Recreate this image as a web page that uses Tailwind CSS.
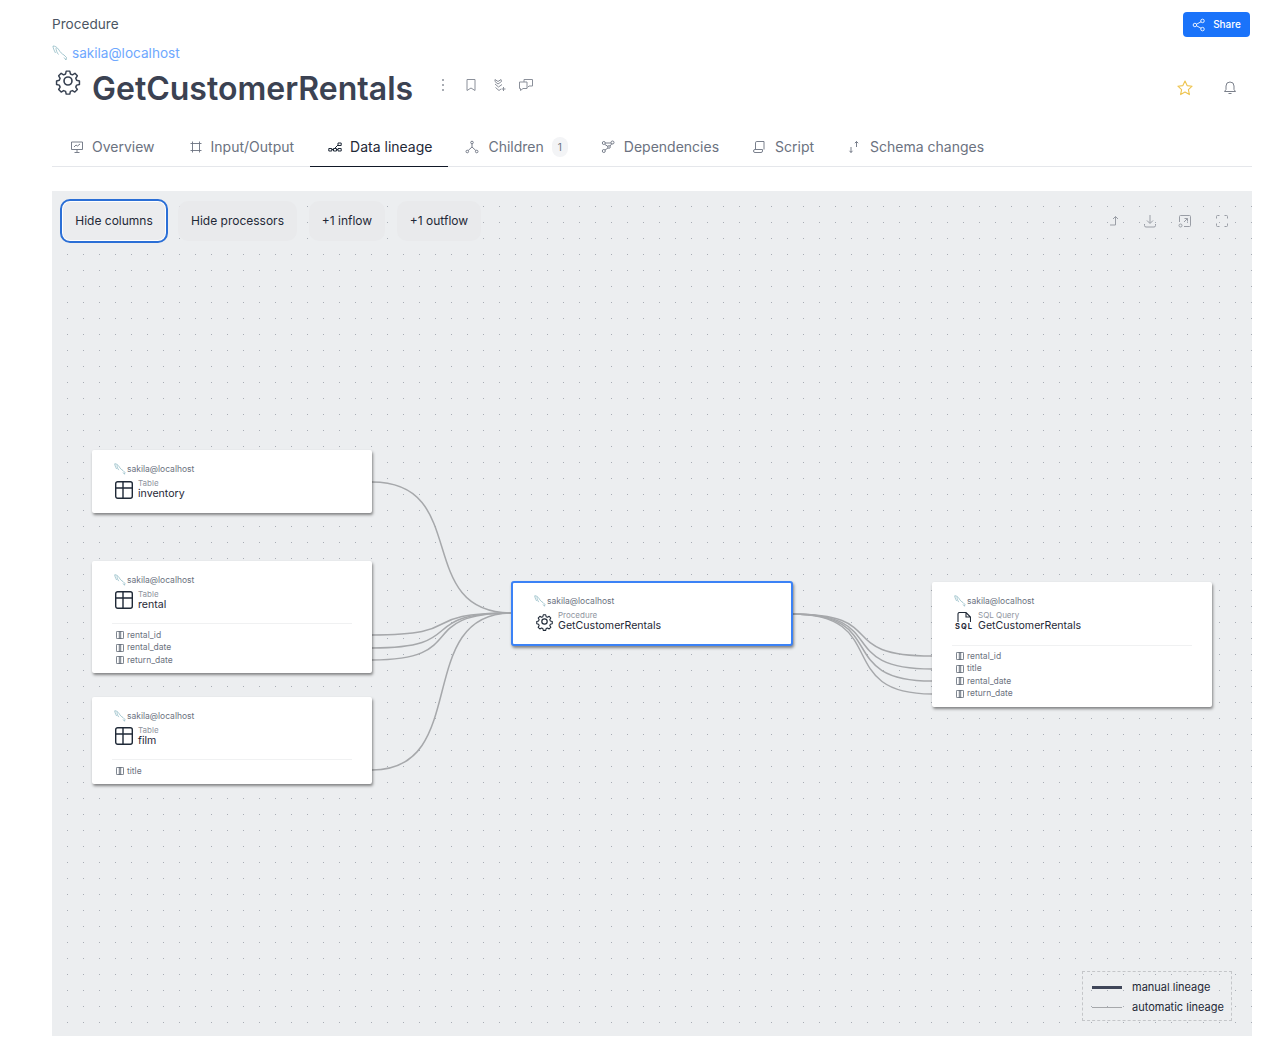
<!DOCTYPE html>
<html lang="en">
<head>
    <meta charset="UTF-8">
    <title>GetCustomerRentals - Data lineage</title>
    <script src="https://cdn.jsdelivr.net/npm/@tailwindcss/browser@4"></script>
</head>
<body class="bg-white min-h-screen font-['Inter',sans-serif] text-[#374151]">
    <div class="pl-[52px] pr-[15px] pt-3">
        <!-- header -->
        <div class="flex justify-between items-start h-[25px]">
            <span class="text-[13.6px] leading-[24px] text-[#4b5563]">Procedure</span>
            <button class="mr-[2px] w-[67px] h-[25px] bg-[#1a73fa] rounded-[4px] flex items-center justify-center gap-[7px] text-white text-[10px] font-medium">
                <svg class="w-[14px] h-[14px]" viewBox="0 0 24 24" fill="none" stroke="currentColor" stroke-width="1.5"><circle cx="5" cy="12" r="3"/><circle cx="18" cy="5" r="3"/><circle cx="18" cy="19" r="3"/><path d="M8 10.5l7.5-4M8 13.5l7.5 4"/></svg>
                Share
            </button>
        </div>
        <div class="flex items-center gap-[4px] mt-[6px] h-5">
            <svg class="w-4 h-4" viewBox="0 0 16 16" fill="none" stroke="#7fb0bc" stroke-width=".7"><path d="M1 1C3 1 5 2 7 5C8 7 10 9 12 10L14.500 12.500L14 15L12 12.500M1 1C1 3 2 5 3.500 8M4 3C4 5 5 8 6.500 9.500"/></svg>
            <span class="text-[13.6px] text-[#6ea8fe]">sakila@localhost</span>
        </div>
        <div class="flex items-start h-[44px] mt-[4px]">
            <svg class="w-[28px] h-[28px] ml-[2px] text-[#374151]" viewBox="0 0 24 24" fill="none" stroke="currentColor" stroke-width="1.4" stroke-linejoin="round"><path d="M10.3 2.6h3.4l.6 2.7 1.9.8 2.4-1.4 2.3 2.4-1.5 2.3.8 1.9 2.7.7v3.3l-2.7.6-.8 1.9 1.5 2.3-2.4 2.4-2.3-1.4-1.9.8-.6 2.6h-3.4l-.6-2.6-1.9-.8-2.3 1.4-2.4-2.4 1.4-2.3-.8-1.9-2.6-.6v-3.3l2.6-.7.8-1.9-1.4-2.3 2.4-2.4 2.3 1.4 1.9-.8z" transform="translate(1.2 1.2) scale(.9)"/><circle cx="12" cy="12" r="3.4"/></svg>
            <h1 class="ml-[10px] text-[32px] leading-[44px] font-semibold text-[#3b4252]">GetCustomerRentals</h1>
            <div class="flex items-center ml-[22px] mt-[4px] h-[28px] text-[#8b909a]">
                <svg class="w-4 h-4" viewBox="0 0 16 16" fill="currentColor"><circle cx="8" cy="3" r="1"/><circle cx="8" cy="8" r="1"/><circle cx="8" cy="13" r="1"/></svg>
                <svg class="w-[14px] h-[14px] ml-[13px]" viewBox="0 0 14 14" fill="none" stroke="currentColor"><path d="M3 1.5h8v11L7 10l-4 2.500z"/></svg>
                <svg class="w-[14px] h-[14px] ml-[15px]" viewBox="0 0 14 14" fill="none" stroke="currentColor"><path d="M2 1.500l3 2 3-2 .5 2-3.500 2.500-3-2.500zM2 6l3.500 3L9 6.500M2.500 9.500L6 12.500l2-1.500M10.500 9v4M8.500 11h4"/></svg>
                <svg class="w-[16px] h-[14px] ml-[11px]" viewBox="0 0 16 14" fill="none" stroke="currentColor"><path d="M6 4V1.500h8.500V8H11l-1.500 1.500M6 4H1.500v6.500h1v2L5 10.500h4V4z"/></svg>
            </div>
            <div class="ml-auto flex items-center mt-[13px] mr-[15px] gap-[30px]">
                <svg class="w-4 h-4" viewBox="0 0 16 16" fill="none" stroke="#eec44f" stroke-width="1.100" stroke-linejoin="round"><path d="M8 1l2.100 4.600 5 .6-3.700 3.400 1 5L8 12.100 3.600 14.600l1-5L.9 6.200l5-.6z"/></svg>
                <svg class="w-[14px] h-[14px]" viewBox="0 0 14 14" fill="none" stroke="#7b808b"><path d="M7 1a4 4 0 0 1 4 4v3.500l1.500 2h-11l1.500-2V5a4 4 0 0 1 4-4zM5.500 12.500h3"/></svg>
            </div>
        </div>

        <!-- tabs -->
        <div class="mt-[17px] h-[39px] border-b border-[#e5e7eb] flex items-stretch text-sm text-[#6b7280]">
            <a class="flex items-center gap-2 pl-[18px] pr-[17px]">
                <svg class="w-[14px] h-[14px]" viewBox="0 0 14 14" fill="none" stroke="currentColor" stroke-width=".9"><path d="M1.500 2h11v7.500h-11zM7 9.500V12M4.500 12.500h5M4 7l2-2 1.500 1L10 4"/></svg>
                <span>Overview</span>
            </a>
            <a class="flex items-center gap-2 pl-[17px] pr-4">
                <svg class="w-[14px] h-[14px]" viewBox="0 0 14 14" fill="none" stroke="currentColor" stroke-width=".9"><path d="M1.500 3.500h11M1.500 10.500h11M3.500 1.500v11M10.500 1.500v11"/></svg>
                <span>Input/Output</span>
            </a>
            <a class="flex items-center gap-2 pr-[16px] pl-[18px] border-b border-[#111827] -mb-px text-[#1f2937]">
                <svg class="w-[14px] h-[14px]" viewBox="0 0 14 14" fill="none" stroke="currentColor"><path d="M.8 8.500h3v2.500h-3zM5.500 8.500h3V11h-3zM10 3h3.200v2.500H10zM10 8.500h3.200V11H10zM3.800 9.500h1.700M8.500 9.500H10M6.500 8.500L10 5"/></svg>
                <span>Data lineage</span>
            </a>
            <a class="flex items-center gap-[9px] pl-[17px] pr-[17px]">
                <svg class="w-[14px] h-[14px]" viewBox="0 0 14 14" fill="none" stroke="currentColor" stroke-width=".9"><circle cx="7" cy="2.500" r="1.300"/><circle cx="2.300" cy="11.500" r="1.300"/><circle cx="11.700" cy="11.500" r="1.300"/><path d="M7 3.800V7M7 7L3.200 10.500M7 7l3.800 3.500"/></svg>
                <span>Children</span>
                <span class="ml-[-1px] w-4 h-5 rounded-lg bg-[#f3f4f6] text-[10px] flex items-center justify-center">1</span>
            </a>
            <a class="flex items-center gap-[9px] pl-4 pr-[15px]">
                <svg class="w-[14px] h-[14px]" viewBox="0 0 14 14" fill="none" stroke="currentColor" stroke-width=".9"><circle cx="2.800" cy="3" r="1.500"/><circle cx="11.500" cy="2.500" r="1.500"/><circle cx="8" cy="7" r="1.300"/><circle cx="2.800" cy="11" r="1.500"/><path d="M4.300 3h5.700M4 4.500L7 6.500M7 8L4 10M9 6l2-2.500"/></svg>
                <span>Dependencies</span>
            </a>
            <a class="flex items-center gap-[9px] pl-[18px] pr-[15px]">
                <svg class="w-[14px] h-[14px]" viewBox="0 0 14 14" fill="none" stroke="currentColor" stroke-width=".9"><path d="M3.500 9V2.800A1.300 1.300 0 0 1 4.800 1.500H12v8M1.500 11a1.500 1.500 0 0 1 1.500-1.500h7.500v1.500a1.500 1.500 0 0 1-1.500 1.500H3A1.500 1.500 0 0 1 1.500 11z"/></svg>
                <span>Script</span>
            </a>
            <a class="flex items-center gap-[9px] pl-[18px] pr-4">
                <svg class="w-[14px] h-[14px]" viewBox="0 0 14 14" fill="none" stroke="currentColor" stroke-width=".9"><path d="M9.500 7V1.500M7.800 3.200l1.700-1.700 1.700 1.700M4 7v5.500M2.500 10.800L4 12.500l1.500-1.700"/></svg>
                <span>Schema changes</span>
            </a>
        </div>

        <!-- lineage canvas -->
        <div class="relative mt-6 h-[845px] bg-[#eceef0] bg-[radial-gradient(circle_at_15.5px_15.5px,#a8adb5_0.5px,transparent_0.9px)] bg-[size:16px_16px]">
            <!-- edges -->
            <svg class="absolute inset-0 w-full h-full" viewBox="0 0 1200 845" fill="none" stroke="#a6a8ab" stroke-width="1.500">
                <path d="M320 291C420 291 360 422 460 422"/>
                <path d="M320 444C420 444 360 422 460 422"/>
                <path d="M320 457C420 457 360 422 460 422"/>
                <path d="M320 469C420 469 360 422 460 422"/>
                <path d="M320 579C420 579 360 422 460 422"/>
                <path d="M740 423C840 423 780 465 880 465"/>
                <path d="M740 423C840 423 780 478 880 478"/>
                <path d="M740 423C840 423 780 490 880 490"/>
                <path d="M740 423C840 423 780 503 880 503"/>
            </svg>

            <!-- toolbar -->
            <div class="relative flex items-center pt-2 pl-2 text-xs text-[#1f2937]">
                <button class="h-[44px] w-[108px] rounded-[10px] border-2 border-[#2b6fd6] bg-[#ebecee] shadow-[inset_0_0_0_1px_#fff]">Hide columns</button>
                <button class="ml-[10px] h-10 w-[119px] rounded-[10px] bg-[#e9eaec]">Hide processors</button>
                <button class="ml-3 h-10 w-[76px] rounded-[10px] bg-[#e9eaec]">+1 inflow</button>
                <button class="ml-3 h-10 w-[84px] rounded-[10px] bg-[#e9eaec]">+1 outflow</button>
                <div class="ml-auto mr-[23px] flex items-center gap-[21px] text-[#9a9ea6]">
                    <svg class="w-[14px] h-[14px]" viewBox="0 0 14 14" fill="none" stroke="currentColor"><path d="M7.500 11V2.500M5 5l2.500-2.500L10 5M7.500 11H2"/></svg>
                    <svg class="w-[14px] h-[14px]" viewBox="0 0 14 14" fill="none" stroke="currentColor"><path d="M7 1v8M4 6.500L7 9.500l3-3M1.500 10v1.500a1.500 1.500 0 0 0 1.500 1.500h8a1.500 1.500 0 0 0 1.500-1.500V10"/></svg>
                    <svg class="w-[14px] h-[14px]" viewBox="0 0 14 14" fill="none" stroke="currentColor"><path d="M1.500 8V2.500a1 1 0 0 1 1-1h9a1 1 0 0 1 1 1v9a1 1 0 0 1-1 1H6M6 8l3.500-3.500M6.500 4.500h3v3"/><circle cx="2.500" cy="11.500" r="1.500"/></svg>
                    <svg class="w-[14px] h-[14px] ml-[2px]" viewBox="0 0 14 14" fill="none" stroke="currentColor"><path d="M1.500 4.500v-2a1 1 0 0 1 1-1h2M9.500 1.500h2a1 1 0 0 1 1 1v2M12.500 9.500v2a1 1 0 0 1-1 1h-2M4.500 12.500h-2a1 1 0 0 1-1-1v-2"/></svg>
                </div>
            </div>

            <!-- inventory -->
            <div class="absolute left-10 top-[259px] w-[280px] h-[63px] bg-white rounded-[2px] shadow-[1px_2px_3px_rgba(0,0,0,.45)] px-5 pt-[13px]">
                <div class="flex items-center gap-[1px] h-3 text-[8.5px] text-[#6b7280]">
                    <svg class="w-3 h-3 ml-[2px]" viewBox="0 0 16 16" fill="none" stroke="#7fb0bc" stroke-width=".9"><path d="M1 1C3 1 5 2 7 5C8 7 10 9 12 10L14.500 12.500L14 15L12 12.500M1 1C1 3 2 5 3.500 8M4 3C4 5 5 8 6.500 9.500"/></svg>
                    <span>sakila@localhost</span>
                </div>
                <div class="flex items-center h-[18px] gap-[5px] mt-[6px] ml-[3px]">
                    <svg class="w-[18px] h-[18px] text-[#1f2937]" viewBox="0 0 18 18" fill="none" stroke="currentColor" stroke-width="1.400"><rect x=".7" y=".7" width="16.600" height="16.600" rx="2"/><path d="M.7 7h16.600M8 .7v16.600"/></svg>
                    <div class="leading-none -mt-[2px]">
                        <div class="text-[8px] text-[#8f95a0]">Table</div>
                        <div class="text-[10.6px] text-[#1f2937] mt-[2px]">inventory</div>
                    </div>
                </div>
            </div>

            <!-- rental -->
            <div class="absolute left-10 top-[370px] w-[280px] h-[112px] bg-white rounded-[2px] shadow-[1px_2px_3px_rgba(0,0,0,.45)] px-5 pt-[13px]">
                <div class="flex items-center gap-[1px] h-3 text-[8.5px] text-[#6b7280]">
                    <svg class="w-3 h-3 ml-[2px]" viewBox="0 0 16 16" fill="none" stroke="#7fb0bc" stroke-width=".9"><path d="M1 1C3 1 5 2 7 5C8 7 10 9 12 10L14.500 12.500L14 15L12 12.500M1 1C1 3 2 5 3.500 8M4 3C4 5 5 8 6.500 9.500"/></svg>
                    <span>sakila@localhost</span>
                </div>
                <div class="flex items-center h-[18px] gap-[5px] mt-[5px] ml-[3px]">
                    <svg class="w-[18px] h-[18px] text-[#1f2937]" viewBox="0 0 18 18" fill="none" stroke="currentColor" stroke-width="1.400"><rect x=".7" y=".7" width="16.600" height="16.600" rx="2"/><path d="M.7 7h16.600M8 .7v16.600"/></svg>
                    <div class="leading-none">
                        <div class="text-[8px] text-[#8f95a0]">Table</div>
                        <div class="text-[10.6px] text-[#1f2937] mt-[2px]">rental</div>
                    </div>
                </div>
                <div class="mt-[14px] pt-[5px] border-t border-[#f0f1f2] text-[8.5px] text-[#6b7280]">
                    <div class="flex items-center gap-[3px] h-[12.5px] ml-[4px]"><svg class="w-2 h-2" viewBox="0 0 8 8" fill="none" stroke="#4b5563" stroke-width=".8"><rect x=".4" y=".4" width="7.200" height="7.200" rx=".8"/><path d="M3.300 .4v7.200M4.700 .4v7.200"/></svg>rental_id</div>
                    <div class="flex items-center gap-[3px] h-[12.5px] ml-[4px]"><svg class="w-2 h-2" viewBox="0 0 8 8" fill="none" stroke="#4b5563" stroke-width=".8"><rect x=".4" y=".4" width="7.200" height="7.200" rx=".8"/><path d="M3.300 .4v7.200M4.700 .4v7.200"/></svg>rental_date</div>
                    <div class="flex items-center gap-[3px] h-[12.5px] ml-[4px]"><svg class="w-2 h-2" viewBox="0 0 8 8" fill="none" stroke="#4b5563" stroke-width=".8"><rect x=".4" y=".4" width="7.200" height="7.200" rx=".8"/><path d="M3.300 .4v7.200M4.700 .4v7.200"/></svg>return_date</div>
                </div>
            </div>

            <!-- film -->
            <div class="absolute left-10 top-[506px] w-[280px] h-[87px] bg-white rounded-[2px] shadow-[1px_2px_3px_rgba(0,0,0,.45)] px-5 pt-[13px]">
                <div class="flex items-center gap-[1px] h-3 text-[8.5px] text-[#6b7280]">
                    <svg class="w-3 h-3 ml-[2px]" viewBox="0 0 16 16" fill="none" stroke="#7fb0bc" stroke-width=".9"><path d="M1 1C3 1 5 2 7 5C8 7 10 9 12 10L14.500 12.500L14 15L12 12.500M1 1C1 3 2 5 3.500 8M4 3C4 5 5 8 6.500 9.500"/></svg>
                    <span>sakila@localhost</span>
                </div>
                <div class="flex items-center h-[18px] gap-[5px] mt-[5px] ml-[3px]">
                    <svg class="w-[18px] h-[18px] text-[#1f2937]" viewBox="0 0 18 18" fill="none" stroke="currentColor" stroke-width="1.400"><rect x=".7" y=".7" width="16.600" height="16.600" rx="2"/><path d="M.7 7h16.600M8 .7v16.600"/></svg>
                    <div class="leading-none">
                        <div class="text-[8px] text-[#8f95a0]">Table</div>
                        <div class="text-[10.6px] text-[#1f2937] mt-[2px]">film</div>
                    </div>
                </div>
                <div class="mt-[14px] pt-[5px] border-t border-[#f0f1f2] text-[8.5px] text-[#6b7280]">
                    <div class="flex items-center gap-[3px] h-[12.5px] ml-[4px]"><svg class="w-2 h-2" viewBox="0 0 8 8" fill="none" stroke="#4b5563" stroke-width=".8"><rect x=".4" y=".4" width="7.200" height="7.200" rx=".8"/><path d="M3.300 .4v7.200M4.700 .4v7.200"/></svg>title</div>
                </div>
            </div>

            <!-- procedure -->
            <div class="absolute left-[459px] top-[390px] w-[282px] h-[65px] bg-white rounded-[3px] border-2 border-[#3b82f6] shadow-[1px_2px_3px_rgba(0,0,0,.45)] px-5 pt-[12px]">
                <div class="flex items-center gap-[1px] h-3 text-[8.5px] text-[#6b7280]">
                    <svg class="w-3 h-3 ml-[1px]" viewBox="0 0 16 16" fill="none" stroke="#7fb0bc" stroke-width=".9"><path d="M1 1C3 1 5 2 7 5C8 7 10 9 12 10L14.500 12.500L14 15L12 12.500M1 1C1 3 2 5 3.500 8M4 3C4 5 5 8 6.500 9.500"/></svg>
                    <span>sakila@localhost</span>
                </div>
                <div class="flex items-center h-[19px] gap-[4px] mt-[5px] ml-[2px]">
                    <svg class="w-[19px] h-[19px] text-[#1f2937]" viewBox="0 0 24 24" fill="none" stroke="currentColor" stroke-width="1.500" stroke-linejoin="round"><path d="M10.3 2.600h3.400l.6 2.700 1.900.8 2.400-1.400 2.300 2.400-1.500 2.300.8 1.900 2.700.7v3.300l-2.700.6-.8 1.900 1.500 2.300-2.400 2.400-2.300-1.400-1.900.8-.6 2.600h-3.400l-.6-2.600-1.900-.8-2.300 1.400-2.400-2.400 1.400-2.300-.8-1.900-2.600-.6v-3.300l2.600-.7.8-1.900-1.400-2.300 2.400-2.400 2.300 1.400 1.900-.8z" transform="translate(1.200 1.200) scale(.9)"/><circle cx="12" cy="12" r="3.400"/></svg>
                    <div class="leading-none">
                        <div class="text-[8px] text-[#8f95a0]">Procedure</div>
                        <div class="text-[10.6px] text-[#1f2937] mt-[2px]">GetCustomerRentals</div>
                    </div>
                </div>
            </div>

            <!-- sql query -->
            <div class="absolute left-[880px] top-[391px] w-[280px] h-[125px] bg-white rounded-[2px] shadow-[1px_2px_3px_rgba(0,0,0,.45)] px-5 pt-[13px]">
                <div class="flex items-center gap-[1px] h-3 text-[8.5px] text-[#6b7280]">
                    <svg class="w-3 h-3 ml-[2px]" viewBox="0 0 16 16" fill="none" stroke="#7fb0bc" stroke-width=".9"><path d="M1 1C3 1 5 2 7 5C8 7 10 9 12 10L14.500 12.500L14 15L12 12.500M1 1C1 3 2 5 3.500 8M4 3C4 5 5 8 6.500 9.500"/></svg>
                    <span>sakila@localhost</span>
                </div>
                <div class="flex items-center h-[19px] gap-[6px] mt-[5px] ml-[4px]">
                    <div class="w-4 h-[19px] flex flex-col items-center">
                        <svg class="w-[14px] h-[10px] text-[#1f2937]" viewBox="0 0 14 10" fill="none" stroke="currentColor" stroke-width="1.100"><path d="M1 10V2a1.500 1.500 0 0 1 1.500-1.500H9L13.500 5v5M9 .5V5h4.500"/></svg>
                        <span class="text-[7.5px] leading-[9px] font-bold tracking-[1px] text-[#1f2937]">SQL</span>
                    </div>
                    <div class="leading-none">
                        <div class="text-[8px] text-[#8f95a0]">SQL Query</div>
                        <div class="text-[10.6px] text-[#1f2937] mt-[2px]">GetCustomerRentals</div>
                    </div>
                </div>
                <div class="mt-[14px] pt-[4px] border-t border-[#f0f1f2] text-[8.5px] text-[#6b7280]">
                    <div class="flex items-center gap-[3px] h-[12.5px] ml-[4px]"><svg class="w-2 h-2" viewBox="0 0 8 8" fill="none" stroke="#4b5563" stroke-width=".8"><rect x=".4" y=".4" width="7.200" height="7.200" rx=".8"/><path d="M3.300 .4v7.200M4.700 .4v7.200"/></svg>rental_id</div>
                    <div class="flex items-center gap-[3px] h-[12.5px] ml-[4px]"><svg class="w-2 h-2" viewBox="0 0 8 8" fill="none" stroke="#4b5563" stroke-width=".8"><rect x=".4" y=".4" width="7.200" height="7.200" rx=".8"/><path d="M3.300 .4v7.200M4.700 .4v7.200"/></svg>title</div>
                    <div class="flex items-center gap-[3px] h-[12.5px] ml-[4px]"><svg class="w-2 h-2" viewBox="0 0 8 8" fill="none" stroke="#4b5563" stroke-width=".8"><rect x=".4" y=".4" width="7.200" height="7.200" rx=".8"/><path d="M3.300 .4v7.200M4.700 .4v7.200"/></svg>rental_date</div>
                    <div class="flex items-center gap-[3px] h-[12.5px] ml-[4px]"><svg class="w-2 h-2" viewBox="0 0 8 8" fill="none" stroke="#4b5563" stroke-width=".8"><rect x=".4" y=".4" width="7.200" height="7.200" rx=".8"/><path d="M3.300 .4v7.200M4.700 .4v7.200"/></svg>return_date</div>
                </div>
            </div>

            <!-- legend -->
            <div class="absolute right-5 bottom-[15px] w-[150px] h-[50px] border border-dashed border-[#c4c6c9] pl-[9px] pt-[2px] flex flex-col justify-center gap-[6px] text-[11px] text-[#1f2937]">
                <div class="flex items-center gap-[10px] h-[14px]"><span class="w-[30px] h-[3px] bg-[#3f4659]"></span>manual lineage</div>
                <div class="flex items-center gap-[10px] h-[14px]"><span class="w-[30px] h-px bg-[#a6a8ab]"></span>automatic lineage</div>
            </div>
        </div>
    </div>
</body>
</html>
